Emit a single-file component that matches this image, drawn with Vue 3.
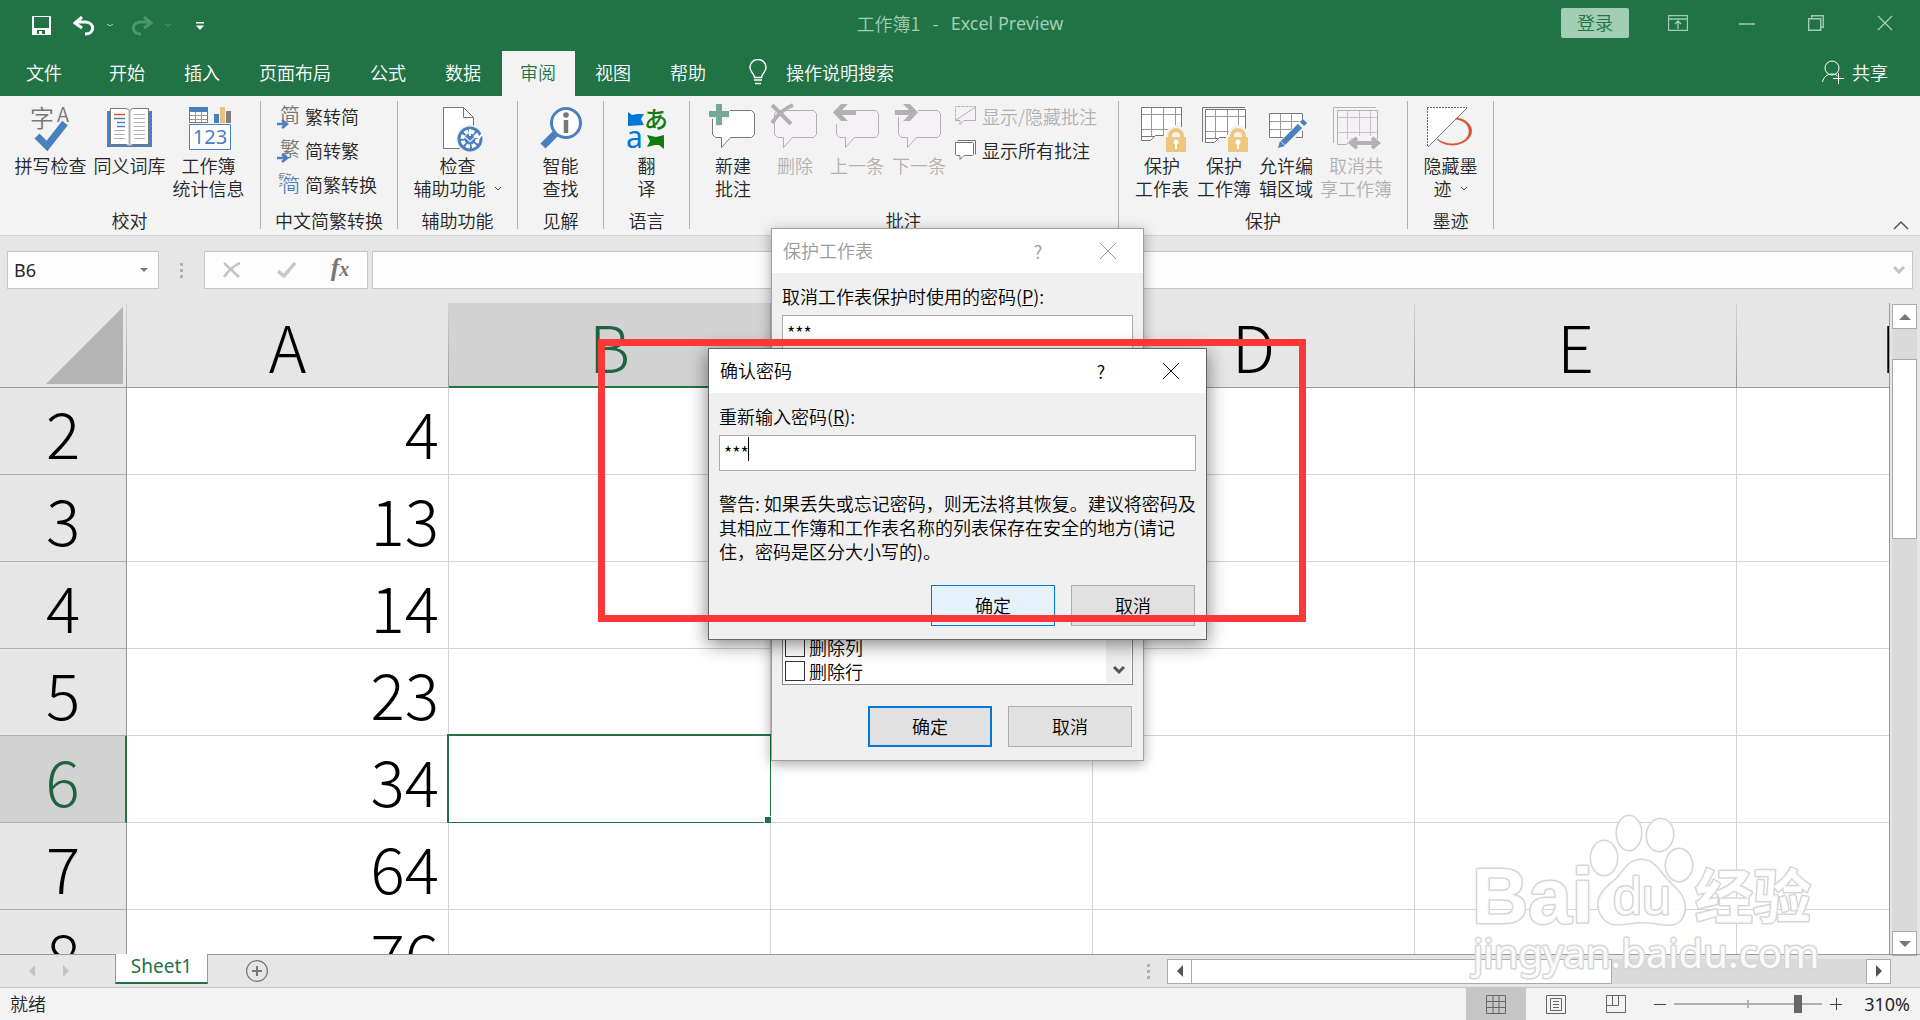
<script setup>
import { ref } from 'vue'

const tabs = ['开始', '插入', '页面布局', '公式', '数据', '审阅', '视图', '帮助']
const activeTab = ref('审阅')

const bubble = 'M6.5 5.5h36l3 3v21l-3 3h-21l-9 10v-10h-6l-3-3v-21z'

const padlock = `
  <g transform="translate(28 23)">
    <path d="M-2 7h2a10 10 0 0 1 20 0h2v18H-2z" fill="#f3f3f3" />
    <path d="M4 11V8a6 6 0 0 1 12 0v3" fill="none" stroke="#edc77e" stroke-width="4" />
    <path d="M0 9h20v15H0z" fill="#edc77e" />
    <circle cx="10" cy="14" r="2.5" fill="#fff" />
    <path d="M10 14v7" stroke="#fff" stroke-width="2" />
  </g>`

const arrow = '<path d="M0 19h9M5 15l5 4-5 4" fill="none" stroke="#4a80bd" stroke-width="2.5" />'

// large icons are 48x48, row icons 24x24
const icons = {
  spelling: `
    <text x="3" y="22" font-size="24" fill="#777">字</text>
    <text x="30" y="17" font-size="20" fill="#777">A</text>
    <path d="M10 31 20 41 38 18" fill="none" stroke="#4a80bd" stroke-width="7" />`,
  thesaurus: `
    <path d="M1 6h45v36H1z" fill="#4a80bd" />
    <path d="M4.5 3.5h16l3 2 3-2h16v36h-16l-3 2-3-2h-16z" fill="#fff" stroke="#777" />
    <path d="M23.5 5v36" stroke="#b1b1b1" stroke-width="2" />
    <path d="M8 9.5h11" stroke="#d9502e" stroke-width="1.5" />
    <path d="M8 13.5h11M11 17.5h8M11 21.5h8" stroke="#4a80bd" stroke-width="1.5" />
    <path d="M8 25.5h11M8 29.5h11M8 33.5h11M28 9.5h11M28 13.5h11M28 17.5h11M28 21.5h11M28 25.5h11M28 29.5h11M28 33.5h11" stroke="#b1b1b1" />`,
  stats: `
    <path d="M4.5 2.5h18v15h-18z" fill="#fff" stroke="#777" />
    <path d="M4 2h19v5H4z" fill="#4a80bd" />
    <path d="M5 10.5h17M5 14.5h17M10.5 7v10M16.5 7v10" stroke="#999" />
    <path d="M29 9h5v9h-5z" fill="#4a80bd" />
    <path d="M35 2h5v16h-5z" fill="#e8c284" />
    <path d="M41 6h5v12h-5z" fill="#808080" />
    <path d="M4.5 19.5h41v25h-41z" fill="#fff" stroke="#4a80bd" />
    <text x="25" y="39" font-size="20" text-anchor="middle" fill="#4a80bd" font-family="Noto Sans" font-weight="400">123</text>`,
  toSimple: `<text x="3" y="18" font-size="20" fill="#777">简</text>${arrow}`,
  toTrad: `<text x="3" y="18" font-size="20" fill="#777">繁</text>${arrow}`,
  convert: `
    <text x="1" y="12" font-size="14" fill="#777">繁</text>
    <text x="5" y="19" font-size="18" fill="#4a80bd" stroke="#f3f3f3" stroke-width="3" paint-order="stroke">简</text>`,
  check: `
    <path d="M9.5 2.5h20l10 10v31h-30z" fill="#fff" stroke="#777" />
    <path d="M29.5 2.5v10h10" fill="none" stroke="#777" />
    <circle cx="36" cy="34" r="14" fill="#f3f3f3" />
    <circle cx="36" cy="34" r="11" fill="#4a80bd" stroke="#4a80bd" stroke-width="3" />
    <circle cx="36" cy="34" r="7.5" fill="none" stroke="#fff" stroke-width="4" stroke-dasharray="4 1.9" />
    <path d="M36 24v11M31 31l5 5 5-5" fill="none" stroke="#fff" stroke-width="2" />
    <path d="M31 31l5 5 5-5z" fill="#4a80bd" />
    <path d="M40 31l5 2 3-4" fill="none" stroke="#fff" stroke-width="2" />`,
  lookup: `
    <path d="M19 28 6 41" stroke="#4a80bd" stroke-width="7" />
    <circle cx="29" cy="18" r="14.5" fill="#fff" stroke="#4a80bd" stroke-width="3" />
    <circle cx="29" cy="10" r="2.8" fill="#777" />
    <path d="M29 15v13" stroke="#777" stroke-width="4.5" />`,
  translate: `
    <path d="M5 7l4 3 5-1h7l-3 5 3 6-16 1z" fill="#0078d7" />
    <text x="21" y="23" font-size="24" fill="#107c10" font-weight="500">あ</text>
    <text x="3" y="43" font-size="30" fill="#0078d7" font-family="Noto Sans" font-weight="400">a</text>
    <path d="M24 30l3 6-3 6 8-2h4l5 4V30l-8 2z" fill="#107c10" />`,
  commentNew: `
    <path d="${bubble}" fill="#fff" stroke="#777" />
    <path d="M-1 5h7v-7h9v7h6v9h-6v7H6v-7h-7z" fill="#f3f3f3" />
    <path d="M0 6h7v-7h6v7h7v6h-7v8H7v-8H0z" fill="#75a897" />`,
  commentDelete: `
    <path d="${bubble}" fill="#f6f1f7" stroke="#b1b1b1" />
    <path d="M1 0 20 19M22 0C12 4 6 10 1 18" fill="none" stroke="#b1b1b1" stroke-width="4" />`,
  commentPrev: `
    <path d="${bubble}" fill="#f6f1f7" stroke="#b1b1b1" />
    <path d="M23 4v8H11l6 7H0V-2h16l-7 6z" fill="#f3f3f3" />
    <path d="M23 5v5H9l6 6H8L0 7.5 8-1h7L9 5z" fill="#b1b1b1" />`,
  commentNext: `
    <path d="${bubble}" fill="#f6f1f7" stroke="#b1b1b1" />
    <path d="M0 4v8h12l-6 7h17V-2H7l7 6z" fill="#f3f3f3" />
    <path d="M0 5v5h14l-6 6h7l8-8.5L15-1H8l6 6z" fill="#b1b1b1" />`,
  commentToggle: `
    <path d="M1.5 15.5v-14h20v3" fill="none" stroke="#b1b1b1" stroke-dasharray="3 1" />
    <path d="M1.5 15.5 21.5 2v13.5H10l-4 4v-4z" fill="#f6f1f7" stroke="#b1b1b1" />`,
  commentAll: `
    <path d="M3.5 1.5h18v14" fill="none" stroke="#777" />
    <path d="M1.5 3.5h17l1 1v11l-1 1H10l-4 4v-4H2.5l-1-1z" fill="#fff" stroke="#777" />`,
  lockSheet: `
    <path d="M3.5 2.5h40v28h-26l-5 5h-9z" fill="#fff" stroke="#777" />
    <path d="M13.5 3v28M25.5 3v28M37.5 3v28M4 9.5h39M4 24.5h39" stroke="#999" />
    <path d="M3.5 31.5h13" stroke="#777" />${padlock}`,
  lockBook: `
    <path d="M2.5 37V2.5H45" fill="none" stroke="#777" />
    <path d="M5.5 4.5h40v28h-26l-5 5h-9z" fill="#fff" stroke="#777" />
    <path d="M15.5 5v28M27.5 5v28M38.5 5v28M6 11.5h39M6 26.5h39" stroke="#999" />
    <path d="M5.5 33.5h13" stroke="#777" />${padlock}`,
  editRange: `
    <path d="M7.5 8.5h33v24h-33z" fill="#fff" stroke="#777" />
    <path d="M18.5 9v23M29.5 9v23M8 16.5h32M8 24.5h32" stroke="#999" />
    <path d="M17 43 43 17" stroke="#f3f3f3" stroke-width="9" />
    <path d="M21 38 38 21M40 19l3-3" stroke="#4a80bd" stroke-width="6" />
    <path d="M16 43l2-7 5 5z" fill="#4a80bd" />`,
  unshare: `
    <path d="M1.5 38V2.5H44" fill="none" stroke="#b8b4b9" />
    <path d="M5.5 5.5h40v28h-26l-5 6h-9z" fill="#f6f1f7" stroke="#b1b1b1" />
    <path d="M15.5 6v28M27.5 6v28M38.5 6v28M6 12.5h39M6 27.5h39" stroke="#c5c1c6" />
    <path d="M16 38l7-7h19l7 7-7 7H23z" fill="#f3f3f3" />
    <path d="M20 38h25M25 33l-6 5 6 5M40 33l6 5-6 5" fill="none" stroke="#b1b1b1" stroke-width="4" />`,
  ink: `
    <path d="M40 2.5H.5V42z" fill="#fff" />
    <path d="M0 2.5h40M.5 3v39" stroke="#666" stroke-dasharray="2 1" />
    <path d="M1 42 40 3" stroke="#777" />
    <path d="M29 13c20 2 22 24-2 27-8 0-13-2-17-6 4 3 10 5 16 5 20-1 22-22 3-25z" fill="#d9502e" stroke="#d9502e" stroke-width=".8" />`
}

const groups = [
  {
    label: '校对',
    size: 'wide',
    buttons: [
      { icon: 'spelling', lines: ['拼写检查'] },
      { icon: 'thesaurus', lines: ['同义词库'] },
      { icon: 'stats', lines: ['工作簿', '统计信息'] }
    ]
  },
  {
    label: '中文简繁转换',
    size: 'convert',
    rows: [
      { icon: 'toSimple', text: '繁转简' },
      { icon: 'toTrad', text: '简转繁' },
      { icon: 'convert', text: '简繁转换' }
    ]
  },
  { label: '辅助功能', size: 'access', buttons: [{ icon: 'check', lines: ['检查', '辅助功能'], menu: true }] },
  { label: '见解', size: 'single', buttons: [{ icon: 'lookup', lines: ['智能', '查找'] }] },
  { label: '语言', size: 'single', buttons: [{ icon: 'translate', lines: ['翻', '译'] }] },
  {
    label: '批注',
    size: 'comments',
    buttons: [
      { icon: 'commentNew', lines: ['新建', '批注'] },
      { icon: 'commentDelete', lines: ['删除'], disabled: true },
      { icon: 'commentPrev', lines: ['上一条'], disabled: true },
      { icon: 'commentNext', lines: ['下一条'], disabled: true }
    ],
    rows: [
      { icon: 'commentToggle', text: '显示/隐藏批注', disabled: true },
      { icon: 'commentAll', text: '显示所有批注' }
    ]
  },
  {
    label: '保护',
    size: 'protect',
    buttons: [
      { icon: 'lockSheet', lines: ['保护', '工作表'] },
      { icon: 'lockBook', lines: ['保护', '工作簿'] },
      { icon: 'editRange', lines: ['允许编', '辑区域'] },
      { icon: 'unshare', lines: ['取消共', '享工作簿'], disabled: true, wide: true }
    ]
  },
  { label: '墨迹', size: 'single', buttons: [{ icon: 'ink', lines: ['隐藏墨', '迹'], menu: true }] }
]

const columns = ['A', 'B', 'C', 'D', 'E', 'F']
const rows = [
  { n: 2, a: 4 },
  { n: 3, a: 13 },
  { n: 4, a: 14 },
  { n: 5, a: 23 },
  { n: 6, a: 34 },
  { n: 7, a: 64 },
  { n: 8, a: 76 }
]

const nameBox = ref('B6')
const formula = ref('')
const password = ref('***')
const confirmPassword = ref('***')
const permissions = ref([
  { label: '删除列', checked: false },
  { label: '删除行', checked: false }
])
const zoom = ref(86)
</script>

<template>
  <div class="excel">
    <!-- title bar -->
    <header class="titlebar">
      <div class="quick-access">
        <button class="qa save" aria-label="保存">
          <svg width="20" height="20" viewBox="0 0 20 20"><path d="M0 0h19v19H0zM2 1v11h15V1zM5 14v4h2v-3h3v3h3v-4z" fill="#fff" fill-rule="evenodd" /></svg>
        </button>
        <button class="qa" aria-label="撤消">
          <svg width="22" height="20" viewBox="0 0 22 20"><path d="M9 1 2 7l7 5M2 6h11c9 1 9 12-1 12" fill="none" stroke="#fff" stroke-width="3" /></svg>
        </button>
        <button class="qa small" aria-label="撤消列表"><svg width="8" height="5" viewBox="0 0 8 5"><path d="M1 1l3 2 3-2" fill="none" stroke="#b7d4c2" /></svg></button>
        <button class="qa" aria-label="恢复" disabled>
          <svg width="22" height="20" viewBox="0 0 22 20"><path d="M13 1l7 6-7 5M20 6H9c-9 1-9 12 1 12" fill="none" stroke="#4f9470" stroke-width="3" /></svg>
        </button>
        <button class="qa small" aria-label="恢复列表"><svg width="8" height="5" viewBox="0 0 8 5"><path d="M1 1l3 2 3-2" fill="none" stroke="#5f9d7b" /></svg></button>
        <button class="qa custom" aria-label="自定义快速访问工具栏"><svg width="8" height="8" viewBox="0 0 8 8"><path d="M0 0h8v1.5H0zM0 3.5h8L4 8z" fill="#fff" /></svg></button>
      </div>
      <div class="doc-title"><span>工作簿1</span><span>-</span><span class="latin">Excel Preview</span></div>
      <div class="window-tools">
        <button class="login">登录</button>
        <button class="win" aria-label="功能区显示选项"><svg width="20" height="16" viewBox="0 0 20 16"><path d="M.5.5h19v15H.5zM0 4h20M10 14V6M7 9l3-3 3 3" fill="none" stroke="#a0cdb4" stroke-width="1.3" /></svg></button>
        <button class="win" aria-label="最小化"><svg width="16" height="16" viewBox="0 0 16 16"><path d="M0 9h16" stroke="#a0cdb4" stroke-width="1.5" /></svg></button>
        <button class="win" aria-label="还原"><svg width="16" height="16" viewBox="0 0 16 16"><path d="M.7 3.7h12v11.5H.7zM3.7 3V.7h11.5v11.5H13" fill="none" stroke="#a0cdb4" stroke-width="1.4" /></svg></button>
        <button class="win" aria-label="关闭"><svg width="16" height="16" viewBox="0 0 16 16"><path d="M1 1l14 14M15 1 1 15" stroke="#a0cdb4" stroke-width="1.4" /></svg></button>
      </div>
    </header>

    <nav class="tabs">
      <button class="tab file">文件</button>
      <button v-for="t in tabs" :key="t" class="tab" :class="{ active: t === activeTab }" @click="activeTab = t">{{ t }}</button>
      <button class="tell-me">
        <svg width="18" height="26" viewBox="0 0 18 26"><path d="M5.5 18.5c0-4-4.5-5-4.5-10a8 8 0 0 1 16 0c0 5-4.5 6-4.5 10zM5 21h8M6 24.5h6" fill="none" stroke="#fff" stroke-width="1.5" /></svg>
        操作说明搜索
      </button>
      <button class="share">
        <svg width="22" height="24" viewBox="0 0 22 24"><circle cx="10" cy="8" r="7" fill="none" stroke="#fff" /><path d="M.5 22c1-5 5-8 9-8 2 0 4 0 6 2M11 18.5h11M16.5 13v11" fill="none" stroke="#fff" /></svg>
        共享
      </button>
    </nav>

    <!-- ribbon -->
    <section class="ribbon">
      <template v-for="g in groups" :key="g.label">
        <div class="group" :class="g.size">
          <div class="group-body">
            <button v-for="b in g.buttons" :key="b.icon" class="big" :class="{ 'extra-wide': b.wide }" :disabled="b.disabled">
              <svg class="icon" viewBox="0 0 48 48" v-html="icons[b.icon]"></svg>
              <span v-for="(line, i) in b.lines" :key="line" class="line">
                {{ line }}
                <svg v-if="b.menu && i === b.lines.length - 1" width="8" height="5" viewBox="0 0 8 5"><path d="M1 1l3 3 3-3" fill="none" stroke="#444" /></svg>
              </span>
            </button>
            <div v-if="g.rows" class="rows">
              <button v-for="r in g.rows" :key="r.icon" class="row-btn" :disabled="r.disabled">
                <svg class="icon-sm" viewBox="0 0 24 24" v-html="icons[r.icon]"></svg>
                <span>{{ r.text }}</span>
              </button>
            </div>
          </div>
          <div class="group-label">{{ g.label }}</div>
        </div>
        <span class="divider"></span>
      </template>
      <button class="collapse" aria-label="折叠功能区"><svg width="16" height="10" viewBox="0 0 16 10"><path d="M1 9l7-7 7 7" fill="none" stroke="#555" stroke-width="1.5" /></svg></button>
    </section>

    <!-- formula bar -->
    <div class="formula-bar">
      <div class="name-box">
        <input v-model="nameBox" class="latin" aria-label="名称框" />
        <button aria-label="名称列表"><svg width="8" height="4" viewBox="0 0 8 4"><path d="M0 0h8L4 4z" fill="#777" /></svg></button>
      </div>
      <span class="dots"><i></i><i></i><i></i></span>
      <div class="fx-box">
        <button aria-label="取消"><svg width="18" height="16" viewBox="0 0 18 16"><path d="M1 1l15 14M17 1C10 4 5 9 1 15" fill="none" stroke="#c3c3c3" stroke-width="2.5" /></svg></button>
        <button aria-label="输入"><svg width="19" height="16" viewBox="0 0 19 16"><path d="M1 9l6 5L18 1" fill="none" stroke="#c8c8c8" stroke-width="3.5" /></svg></button>
        <button class="fx" aria-label="插入函数"><em>f<small>x</small></em></button>
      </div>
      <div class="formula">
        <input v-model="formula" aria-label="编辑栏" />
        <button aria-label="展开编辑栏"><svg width="12" height="8" viewBox="0 0 12 8"><path d="M1 1l5 5 5-5" fill="none" stroke="#c3c3c3" stroke-width="3" /></svg></button>
      </div>
    </div>

    <!-- sheet -->
    <main class="sheet">
      <div class="grid-view">
        <table class="grid">
          <colgroup>
            <col class="col-head" />
            <col v-for="c in columns" :key="c" class="col" />
          </colgroup>
          <thead>
            <tr>
              <th class="corner"><svg width="77" height="77" viewBox="0 0 77 77"><path d="M77 0v77H0z" fill="#b4b4b4" /></svg></th>
              <th v-for="c in columns" :key="c" scope="col" :class="{ selected: c === 'B' }">{{ c }}</th>
            </tr>
          </thead>
          <tbody>
            <tr v-for="r in rows" :key="r.n">
              <th scope="row" :class="{ selected: r.n === 6 }">{{ r.n }}</th>
              <td v-for="c in columns" :key="c">
                <template v-if="c === 'A'">{{ r.a }}</template>
                <span v-if="c === 'B' && r.n === 6" class="cursor"></span>
              </td>
            </tr>
          </tbody>
        </table>
      </div>
      <div class="vscroll">
        <button aria-label="向上滚动"><svg width="12" height="6" viewBox="0 0 12 6"><path d="M6 0l6 6H0z" fill="#777" /></svg></button>
        <div class="vtrack"><div class="vthumb"></div></div>
        <button aria-label="向下滚动"><svg width="12" height="6" viewBox="0 0 12 6"><path d="M6 6l6-6H0z" fill="#777" /></svg></button>
      </div>
    </main>

    <div class="sheet-bar">
      <button class="nav" aria-label="上一张工作表" disabled><svg width="6" height="12" viewBox="0 0 6 12"><path d="M6 0v12L0 6z" fill="#c3c3c3" /></svg></button>
      <button class="nav" aria-label="下一张工作表" disabled><svg width="6" height="12" viewBox="0 0 6 12"><path d="M0 0v12l6-6z" fill="#c3c3c3" /></svg></button>
      <button class="sheet-tab">Sheet1</button>
      <button class="add" aria-label="新工作表"><svg width="22" height="22" viewBox="0 0 22 22"><circle cx="11" cy="11" r="10.4" fill="none" stroke="#777" stroke-width="1.2" /><path d="M6 11h10M11 6v10" stroke="#777" stroke-width="2" /></svg></button>
      <span class="dots push"><i></i><i></i><i></i></span>
      <div class="hscroll">
        <button aria-label="向左滚动"><svg width="6" height="12" viewBox="0 0 6 12"><path d="M6 0v12L0 6z" fill="#555" /></svg></button>
        <div class="htrack"><div class="hthumb"></div></div>
        <button aria-label="向右滚动"><svg width="6" height="12" viewBox="0 0 6 12"><path d="M0 0v12l6-6z" fill="#555" /></svg></button>
      </div>
    </div>

    <footer class="status">
      <span class="ready">就绪</span>
      <button class="view on" aria-label="普通"><svg width="20" height="19" viewBox="0 0 20 19"><path d="M.5.5h19v18H.5zM7 0v19M13 0v19M0 6.5h20M0 12.5h20" fill="none" stroke="#666" /></svg></button>
      <button class="view" aria-label="页面布局"><svg width="20" height="19" viewBox="0 0 20 19"><path d="M.5.5h19v18H.5zM4.5 3.5h11v12h-11zM7 6.5h6M7 9.5h6M7 12.5h6" fill="none" stroke="#666" /></svg></button>
      <button class="view" aria-label="分页预览"><svg width="20" height="19" viewBox="0 0 20 19"><path d="M.5.5h19v17H.5zM.5 10.5h12V0M6.5 0v10" fill="none" stroke="#666" /></svg></button>
      <button class="zoom-btn" aria-label="缩小"><svg width="12" height="12" viewBox="0 0 12 12"><path d="M0 6.5h12" stroke="#444" /></svg></button>
      <input v-model="zoom" class="zoom" type="range" min="0" max="100" aria-label="显示比例" />
      <button class="zoom-btn" aria-label="放大"><svg width="12" height="12" viewBox="0 0 12 12"><path d="M0 6.5h12M6.5 0v12" stroke="#444" /></svg></button>
      <span class="percent latin">310%</span>
    </footer>

    <!-- protect sheet dialog -->
    <div class="dialog protect-dialog" role="dialog" aria-label="保护工作表">
      <div class="dialog-title">
        <span>保护工作表</span>
        <button aria-label="帮助">?</button>
        <button aria-label="关闭"><svg width="16" height="16" viewBox="0 0 16 16"><path d="M0 0l16 16M16 0 0 16" stroke="currentColor" /></svg></button>
      </div>
      <div class="dialog-body">
        <label for="pwd">取消工作表保护时使用的密码(<u>P</u>):</label>
        <input id="pwd" v-model="password" class="field" type="text" />
        <div class="perm-list">
          <div class="perm-items">
            <label v-for="p in permissions" :key="p.label"><input v-model="p.checked" type="checkbox" />{{ p.label }}</label>
          </div>
          <div class="perm-scroll"><svg width="12" height="9" viewBox="0 0 12 9"><path d="M1 1l5 5 5-5" fill="none" stroke="#555" stroke-width="3" /></svg></div>
        </div>
        <div class="actions">
          <button class="btn focus">确定</button>
          <button class="btn">取消</button>
        </div>
      </div>
    </div>

    <!-- confirm password dialog -->
    <div class="dialog confirm-dialog" role="dialog" aria-label="确认密码">
      <div class="dialog-title">
        <span>确认密码</span>
        <button aria-label="帮助">?</button>
        <button aria-label="关闭"><svg width="16" height="16" viewBox="0 0 16 16"><path d="M0 0l16 16M16 0 0 16" stroke="currentColor" /></svg></button>
      </div>
      <div class="dialog-body">
        <label for="pwd2">重新输入密码(<u>R</u>):</label>
        <div class="field-wrap">
          <input id="pwd2" v-model="confirmPassword" class="field" type="text" />
          <span class="caret"></span>
        </div>
        <p class="warning">警告: 如果丢失或忘记密码，则无法将其恢复。建议将密码及其相应工作簿和工作表名称的列表保存在安全的地方(请记住，密码是区分大小写的)。</p>
        <div class="actions">
          <button class="btn hover">确定</button>
          <button class="btn">取消</button>
        </div>
      </div>
    </div>

    <div class="highlight"></div>

    <svg class="watermark" width="350" height="180" viewBox="0 0 350 180" aria-hidden="true">
      <g fill="#fff" fill-opacity=".9" stroke="#d6d6d6" stroke-width="3" stroke-linejoin="round" paint-order="stroke">
        <ellipse cx="134" cy="50" rx="13" ry="17" />
        <ellipse cx="159" cy="25" rx="12" ry="17" />
        <ellipse cx="190" cy="27" rx="13" ry="16" transform="rotate(8 190 27)" />
        <ellipse cx="209" cy="57" rx="13" ry="16" />
        <path d="M171 52c-15 0-16 13-29 23-14 11-17 22-10 33 9 14 23 6 41 6 17 0 31 8 39-4 6-12 2-22-10-33-13-12-16-25-31-25z" />
        <text class="bai" x="2" y="115">Bai</text>
        <text class="du" x="143" y="106">du</text>
        <text class="jy" x="225" y="110">经验</text>
        <text class="url" x="3" y="160">jingyan.baidu.com</text>
      </g>
    </svg>
  </div>
</template>

<style>
body {
  margin: 0;
  overflow: hidden;
}
</style>

<style scoped>
.excel {
  position: relative;
  display: flex;
  flex-direction: column;
  height: 100vh;
  background: #e6e6e6;
  color: #262626;
  font-family: 'Noto Sans CJK SC', 'Noto Sans', sans-serif;
  font-size: 18px;
  font-weight: 350;
}

.excel * {
  box-sizing: border-box;
}

button,
input {
  font: inherit;
  color: inherit;
}

button {
  display: flex;
  align-items: center;
  justify-content: center;
  padding: 0;
  border: none;
  background: none;
  white-space: nowrap;
}

.latin {
  font-family: 'Noto Sans', sans-serif;
  font-weight: 400;
}

/* title bar */
.titlebar {
  position: relative;
  display: flex;
  justify-content: space-between;
  height: 51px;
  background: #217346;
}

.quick-access {
  display: flex;
  align-items: center;
  padding-left: 32px;
}

.qa.save {
  margin-right: 21px;
}

.qa.small {
  width: 8px;
  margin: 0 17px 0 11px;
}

.qa.custom {
  margin-left: 7px;
}

.doc-title {
  position: absolute;
  top: 0;
  left: 50%;
  display: flex;
  gap: 12px;
  line-height: 46px;
  color: #a0cdb4;
  transform: translateX(-50%);
}

.window-tools {
  display: flex;
  align-items: center;
  height: 46px;
  padding-right: 1px;
}

.login {
  width: 68px;
  height: 30px;
  margin-right: 14px;
  padding-bottom: 2px;
  border-radius: 2px;
  background: #a0cdb4;
  color: #217346;
}

.win {
  width: 69px;
  height: 46px;
}

/* tabs */
.tabs {
  display: flex;
  gap: 2px;
  height: 45px;
  background: #217346;
  color: #fff;
}

.tab {
  padding: 0 19px 4px 18px;
}

.tab.file {
  padding: 0 27px 4px 26px;
}

.tab.active {
  background: #f3f3f3;
  color: #217346;
}

.tell-me {
  gap: 19px;
  margin-left: 22px;
  padding-bottom: 3px;
}

.share {
  gap: 8px;
  margin: 0 32px 0 auto;
  padding-bottom: 3px;
}

/* ribbon */
.ribbon {
  display: flex;
  height: 140px;
  border-bottom: 1px solid #d2d2d2;
  background: #f3f3f3;
}

.divider {
  width: 1px;
  margin: 5px 0 6px;
  background: #b1b1b1;
}

.group {
  display: flex;
  flex-direction: column;
  justify-content: space-between;
  padding: 9px 12px 3px;
}

.group-body {
  display: flex;
}

.group-label {
  line-height: 23px;
  text-align: center;
}

.big {
  flex-direction: column;
  justify-content: flex-start;
  width: 62px;
  height: 96px;
}

.wide {
  padding-left: 11px;
}

.wide .big {
  width: 79px;
}

.access .big {
  width: 95px;
}

.extra-wide {
  width: 78px;
}

.single {
  padding-right: 0;
  padding-left: 0;
}

.single .big {
  width: 85px;
}

.comments {
  padding-right: 13px;
}

.icon {
  flex: none;
  width: 48px;
  height: 48px;
  margin-bottom: 1px;
  overflow: visible;
}

.line {
  display: flex;
  align-items: center;
  gap: 8px;
  line-height: 23px;
}

.rows {
  display: flex;
  flex-direction: column;
  gap: 10px;
  padding: 0 8px 0 4px;
}

.row-btn {
  justify-content: flex-start;
  gap: 4px;
  height: 24px;
  line-height: 24px;
}

.row-btn span {
  padding-bottom: 2px;
}

.icon-sm {
  width: 24px;
  height: 24px;
  overflow: visible;
}

button:disabled {
  color: #b1b1b1;
}

.collapse {
  align-self: flex-end;
  margin: 0 11px 5px auto;
}

/* formula bar */
.formula-bar {
  display: flex;
  height: 67px;
  padding: 15px 7px 14px;
}

.name-box,
.fx-box,
.formula {
  display: flex;
  border: 1px solid #c6c6c6;
  background: #fdfdfd;
}

.name-box {
  width: 152px;
}

.name-box input,
.formula input {
  flex: 1;
  min-width: 0;
  padding: 0 6px;
  border: none;
  outline: none;
  background: none;
}

.name-box button {
  width: 28px;
}

.dots {
  display: flex;
  flex-direction: column;
  align-items: center;
  justify-content: center;
  gap: 3px;
  width: 45px;
}

.dots i {
  width: 3px;
  height: 3px;
  background: #b1b1b1;
}

.fx-box {
  width: 164px;
}

.fx-box button {
  flex: 1;
}

.fx {
  padding-bottom: 4px;
  color: #777;
  font-family: 'Liberation Serif', serif;
  font-size: 26px;
  font-weight: 700;
}

.fx small {
  font-size: 20px;
}

.formula {
  flex: 1;
  margin-left: 4px;
}

.formula button {
  width: 26px;
}

/* sheet */
.sheet {
  display: flex;
  flex: 1;
  min-height: 0;
}

.grid-view {
  flex: 1;
  min-width: 0;
  overflow: hidden;
  border-right: 1px solid #999;
}

.grid {
  width: 2059px;
  table-layout: fixed;
  border-spacing: 0;
  color: #000;
  font-size: 64px;
  font-weight: 300;
}

.col-head {
  width: 127px;
}

.col {
  width: 322px;
}

.grid th,
.grid td {
  height: 87px;
  padding: 0;
  line-height: 86px;
}

.grid th {
  background: #e6e6e6;
  font-weight: 300;
}

.grid td {
  position: relative;
  padding-right: 9px;
  border-right: 1px solid #d4d4d4;
  border-bottom: 1px solid #d4d4d4;
  background: #fff;
  text-align: right;
}

.grid thead th {
  height: 85px;
  border-right: 1px solid;
  border-bottom: 1px solid #999;
  border-image: linear-gradient(#d4d4d4, #999) 1;
  line-height: 84px;
}

.grid tbody th {
  border-right: 1px solid #999;
  border-bottom: 1px solid #b1b1b1;
}

.grid th.selected {
  background: #d2d2d2;
  color: #1e6440;
}

.grid thead th.selected {
  box-shadow: inset 0 -1px #217346;
  border-image: none;
  border-right-color: #b1b1b1;
  border-bottom-color: #217346;
}

.grid tbody th.selected {
  border-right: 2px solid #217346;
}

.grid .corner {
  text-align: right;
  vertical-align: bottom;
}

.corner svg {
  display: block;
  margin: 0 3px 3px auto;
}

.cursor {
  position: absolute;
  top: -2px;
  right: -2px;
  bottom: -2px;
  left: -2px;
  border: 2px solid #217346;
}

.cursor::after {
  position: absolute;
  right: -4px;
  bottom: -4px;
  width: 8px;
  height: 8px;
  border: 1px solid #fff;
  background: #217346;
  content: '';
}

.vscroll {
  display: flex;
  flex-direction: column;
  width: 25px;
  margin: 1px 3px -2px 2px;
}

.vscroll button,
.hscroll button {
  flex: none;
  width: 25px;
  height: 25px;
  border: 1px solid #ababab;
  background: #fff;
}

.vtrack {
  flex: 1;
  padding-top: 30px;
  background: #dadada;
}

.vthumb {
  height: 180px;
  border: 1px solid #ababab;
  background: #fff;
}

/* sheet tabs */
.sheet-bar {
  display: flex;
  align-items: center;
  height: 33px;
  padding: 0 29px 0 29px;
  border-top: 1px solid #999;
}

.nav {
  width: 6px;
  margin-right: 28px;
}

.sheet-tab {
  align-self: flex-start;
  width: 93px;
  height: 30px;
  margin: -1px 38px 0 18px;
  padding-bottom: 4px;
  border-right: 1px solid #999;
  border-bottom: 2px solid #217346;
  border-left: 1px solid #999;
  background: #fff;
  color: #217346;
  font-family: 'Noto Sans', sans-serif;
  font-size: 19px;
  font-weight: 400;
}

.push {
  width: 38px;
  margin-left: auto;
}

.hscroll {
  display: flex;
  width: 724px;
}

.htrack {
  flex: 1;
  background: #dadada;
}

.hthumb {
  width: 420px;
  height: 25px;
  border: 1px solid #ababab;
  border-left: none;
  background: #fff;
}

/* status bar */
.status {
  display: flex;
  align-items: center;
  height: 33px;
  padding: 0 10px;
  border-top: 1px solid #c6c6c6;
  background: #f3f3f3;
}

.ready {
  margin-right: auto;
  padding-bottom: 2px;
}

.view {
  width: 60px;
  height: 32px;
}

.view.on {
  background: #c6c6c6;
}

.zoom-btn {
  margin: 0 8px;
}

.zoom {
  width: 148px;
  height: 18px;
  margin: 0;
  appearance: none;
  background:
    linear-gradient(#b1b1b1, #b1b1b1) center / 2px 8px no-repeat,
    linear-gradient(#b1b1b1, #b1b1b1) center / 100% 2px no-repeat;
}

.zoom::-webkit-slider-thumb {
  width: 8px;
  height: 18px;
  appearance: none;
  background: #666;
}

.percent {
  width: 60px;
  text-align: right;
}

/* dialogs */
.dialog {
  position: absolute;
  display: flex;
  flex-direction: column;
  border: 1px solid #a0a0a0;
  background: #f0f0f0;
  color: #000;
  box-shadow: 0 3px 12px rgba(0, 0, 0, 0.35);
}

.protect-dialog {
  top: 228px;
  left: 771px;
  width: 373px;
  height: 533px;
}

.confirm-dialog {
  top: 348px;
  left: 708px;
  width: 499px;
  height: 292px;
  border-color: #666;
  box-shadow: 0 4px 18px rgba(0, 0, 0, 0.5);
}

.dialog-title {
  display: flex;
  align-items: center;
  height: 44px;
  padding: 0 0 0 11px;
  background: #fff;
}

.dialog-title span {
  margin-right: auto;
  padding-bottom: 2px;
}

.dialog-title button {
  width: 70px;
  height: 44px;
}

.protect-dialog .dialog-title {
  color: #999;
}

.dialog-body {
  display: flex;
  flex: 1;
  flex-direction: column;
  padding: 11px 10px 13px;
}

.dialog-body > label {
  line-height: 24px;
}

.field {
  width: 100%;
  height: 36px;
  margin-top: 7px;
  padding: 2px 4px 4px;
  border: 1px solid #ababab;
  outline: none;
  background: #fff;
}

.field-wrap {
  position: relative;
}

.caret {
  position: absolute;
  top: 9px;
  left: 29px;
  width: 1px;
  height: 24px;
  background: #000;
}

.warning {
  margin: 20px -4px 0 0;
  line-height: 24px;
}

.actions {
  display: flex;
  justify-content: flex-end;
  gap: 16px;
  margin: auto 1px 0 0;
}

.btn {
  width: 124px;
  height: 41px;
  padding-bottom: 2px;
  border: 1px solid #adadad;
  background: #e1e1e1;
}

.btn.focus {
  border: 2px solid #0078d7;
}

.btn.hover {
  border-color: #0078d7;
  background: #e5f1fb;
}

.perm-list {
  display: flex;
  flex: 1;
  margin: 60px 0 21px;
  padding: 1px;
  border: 1px solid #828790;
  background: #fff;
}

.perm-items {
  display: flex;
  flex: 1;
  flex-direction: column;
  justify-content: flex-end;
}

.perm-items label {
  display: flex;
  align-items: center;
  gap: 4px;
  height: 24px;
  padding-left: 1px;
}

.perm-items input {
  width: 20px;
  height: 20px;
  margin: 0;
  border: 1px solid #333;
  appearance: none;
  background: #fff;
}

.perm-items input:checked {
  background: #0078d7;
}

.perm-scroll {
  display: flex;
  align-items: flex-end;
  justify-content: center;
  width: 25px;
  padding-bottom: 8px;
  background: #f0f0f0;
}

/* red callout frame */
.highlight {
  position: absolute;
  top: 339px;
  left: 598px;
  width: 708px;
  height: 283px;
  border: 7px solid #fb3838;
  pointer-events: none;
}

.watermark {
  position: absolute;
  right: 100px;
  bottom: 32px;
  overflow: visible;
  pointer-events: none;
}

.bai {
  font: 700 78px 'Liberation Sans', sans-serif;
}

.du {
  font: 400 52px 'Liberation Sans', sans-serif;
}

.jy {
  font: 700 58px 'Noto Sans CJK SC', sans-serif;
}

.url {
  font: 400 40px 'Noto Sans', sans-serif;
}
</style>
